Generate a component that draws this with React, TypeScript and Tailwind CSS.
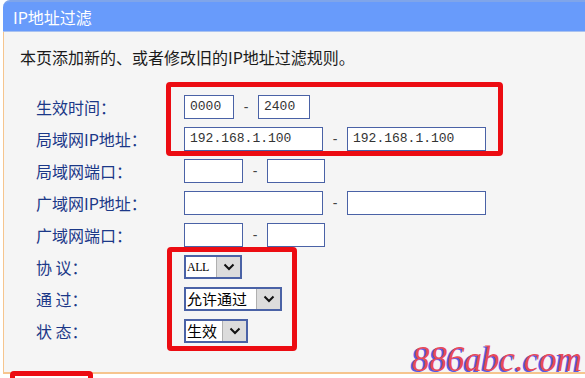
const CJK = 'font-["SimSun","Noto_Sans_CJK_SC",sans-serif]';

function Box({ w, value }: { w: string; value?: string }) {
  return (
    <div
      className={`${w} h-[24px] border border-[#4a62a6] bg-white flex items-center px-[5px] font-["Liberation_Mono",monospace] text-[13px] text-[#333]`}
    >
      {value}
    </div>
  );
}

function Dash() {
  return (
    <span className="w-[24px] h-[24px] flex items-center justify-center text-[#444] text-[14px] leading-none font-['Liberation_Sans',sans-serif]">
      -
    </span>
  );
}

function Select({ w, value, serif }: { w: string; value: string; serif?: boolean }) {
  return (
    <div className={`${w} h-[24px] border-2 border-[#4a62a6] bg-white flex items-stretch`}>
      <div
        className={`flex-1 flex items-center pl-[1px] text-black ${
          serif ? 'font-["Liberation_Serif",serif] text-[12px] tracking-[-0.5px]' : 'font-["Noto_Sans_CJK_SC",sans-serif] text-[15px]'
        }`}
      >
        {value}
      </div>
      <div className="w-[24px] bg-[#dcdcdc] border-l border-[#b0b0b0] flex items-center justify-center">
        <svg width="12" height="8" viewBox="0 0 12 8">
          <path d="M1.5 1.5 L6 6 L10.5 1.5" stroke="#111" strokeWidth="2" fill="none" />
        </svg>
      </div>
    </div>
  );
}

const ROWS: { label: string; field: React.ReactNode }[] = [
  {
    label: '生效时间：',
    field: (
      <>
        <Box w="w-[50px]" value="0000" />
        <Dash />
        <Box w="w-[52px]" value="2400" />
      </>
    ),
  },
  {
    label: '局域网IP地址：',
    field: (
      <>
        <Box w="w-[139px]" value="192.168.1.100" />
        <Dash />
        <Box w="w-[139px]" value="192.168.1.100" />
      </>
    ),
  },
  {
    label: '局域网端口：',
    field: (
      <>
        <Box w="w-[59px]" />
        <Dash />
        <Box w="w-[58px]" />
      </>
    ),
  },
  {
    label: '广域网IP地址：',
    field: (
      <>
        <Box w="w-[139px]" />
        <Dash />
        <Box w="w-[139px]" />
      </>
    ),
  },
  {
    label: '广域网端口：',
    field: (
      <>
        <Box w="w-[59px]" />
        <Dash />
        <Box w="w-[58px]" />
      </>
    ),
  },
  { label: '协 议：', field: <Select w="w-[58px]" value="ALL" serif /> },
  { label: '通 过：', field: <Select w="w-[98px]" value="允许通过" /> },
  { label: '状 态：', field: <Select w="w-[64px]" value="生效" /> },
];

export default function App() {
  return (
    <div className={`relative w-[585px] h-[378px] overflow-hidden bg-white ${CJK}`}>
      {/* title bar */}
      <div className="ml-[3px] h-[32px] rounded-tl-[7px] bg-[#689bfb] border-t-2 border-[#7fa5ea] border-b border-b-[#a9c2f0] flex items-center pl-[10px]">
        <span className="text-white text-[16px] leading-none">IP地址过滤</span>
      </div>

      {/* body */}
      <div className="ml-[3px] h-[342px] bg-[#f5f5f5] border-l border-b-2 border-[#f6c58e] pt-[13px]">
        <p className="h-[24px] pl-[16px] flex items-center text-[16px] text-[#1a1a1a]">
          本页添加新的、或者修改旧的IP地址过滤规则。
        </p>
        <div className="mt-[22px] flex flex-col">
          {ROWS.map((row) => (
            <div key={row.label} className="h-[32px] flex items-center">
              <span className="w-[180px] pl-[32px] text-[16px] text-[#1b3888] whitespace-pre">
                {row.label}
              </span>
              {row.field}
            </div>
          ))}
        </div>
      </div>

      {/* red annotation frames */}
      <div className="absolute left-[166px] top-[82px] w-[337px] h-[74px] border-[5px] border-[#ec0c12] rounded-[4px]" />
      <div className="absolute left-[167px] top-[247px] w-[130px] h-[104px] border-[5px] border-[#ec0c12] rounded-[4px]" />
      <div className="absolute left-[10px] top-[371px] w-[83px] h-[30px] border-[5px] border-[#ec0c12] rounded-[4px]" />

      {/* watermark */}
      <div className='absolute left-[412px] top-[342px] font-["Liberation_Serif",serif] italic text-[35px] leading-none text-[#e84a5a] [text-shadow:-2px_1px_0_#5a5ae6]'>
        886abc.com
      </div>
    </div>
  );
}
